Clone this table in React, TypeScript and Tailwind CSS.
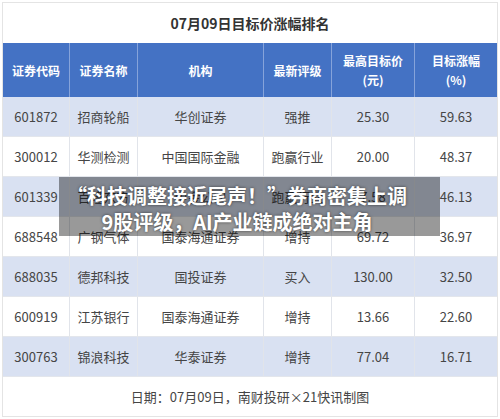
import React from "react";

const rows: string[][] = [
  ["601872", "招商轮船", "华创证券", "强推", "25.30", "59.63"],
  ["300012", "华测检测", "中国国际金融", "跑赢行业", "20.00", "48.37"],
  ["601339", "百隆东方", "中金公司", "跑赢行业", "7.58", "46.13"],
  ["688548", "广钢气体", "国泰海通证券", "增持", "69.72", "36.97"],
  ["688035", "德邦科技", "国投证券", "买入", "130.00", "32.50"],
  ["600919", "江苏银行", "国泰海通证券", "增持", "13.66", "22.60"],
  ["300763", "锦浪科技", "华泰证券", "增持", "77.04", "16.71"],
];

export default function App() {
  return (
    <div className="w-[500px] h-[419px] bg-white pt-[2px] pl-[2px] font-['Noto_Sans_CJK_SC',sans-serif]">
      <div className="relative w-[496px] border border-[#e4e4e4]">
        <div className="h-[40px] flex items-center justify-center text-[14px] font-bold text-[#333333]">
          07月09日目标价涨幅排名
        </div>
        <div className="grid grid-cols-[67px_68px_126px_68px_83px_82px] h-[54px] bg-[#4472c4] text-white text-[12px] font-bold leading-[19px]">
          <div className="flex items-center justify-center border-r border-[#86a3da]">证券代码</div>
          <div className="flex items-center justify-center border-r border-[#86a3da]">证券名称</div>
          <div className="flex items-center justify-center border-r border-[#86a3da]">机构</div>
          <div className="flex items-center justify-center border-r border-[#86a3da]">最新评级</div>
          <div className="flex flex-col items-center justify-center border-r border-[#86a3da] text-center">
            <span>最高目标价</span>
            <span>(元)</span>
          </div>
          <div className="flex flex-col items-center justify-center text-center">
            <span>目标涨幅</span>
            <span>(%)</span>
          </div>
        </div>
        {rows.map((r, i) => (
          <div
            key={i}
            className={
              i % 2 === 0
                ? "grid grid-cols-[67px_68px_126px_68px_83px_82px] h-[40px] bg-[#d9e1f2] border-b border-[#e3e6ec] text-[13px] text-[#454545]"
                : "grid grid-cols-[67px_68px_126px_68px_83px_82px] h-[40px] bg-white border-b border-[#e3e6ec] text-[13px] text-[#454545]"
            }
          >
            {r.map((c, j) => (
              <div
                key={j}
                className={
                  j < 5
                    ? "flex items-center justify-center border-r border-[#e1e4ea]"
                    : "flex items-center justify-center"
                }
              >
                {c}
              </div>
            ))}
          </div>
        ))}
        <div className="h-[39px] flex items-center justify-center text-[13px] text-[#454545]">
          日期：07月09日，南财投研×21快讯制图
        </div>

        <div className="absolute left-[56px] top-[174px] w-[381px] h-[59px] bg-black/40 flex flex-col items-center justify-center pt-[4px] pr-[25px] text-white font-bold text-[20px] leading-[26px] [text-shadow:0_0_3px_rgba(0,0,0,0.6)]">
          <span>“科技调整接近尾声！”券商密集上调</span>
          <span>9股评级，AI产业链成绝对主角</span>
        </div>
      </div>
    </div>
  );
}
